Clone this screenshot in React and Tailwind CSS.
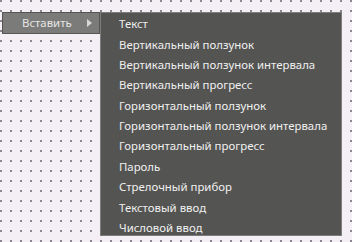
import React from "react";

const items = [
  "Текст",
  "Вертикальный ползунок",
  "Вертикальный ползунок интервала",
  "Вертикальный прогресс",
  "Горизонтальный ползунок",
  "Горизонтальный ползунок интервала",
  "Горизонтальный прогресс",
  "Пароль",
  "Стрелочный прибор",
  "Текстовый ввод",
  "Числовой ввод",
];

const App = () => {
  return (
    <div
      className="w-[352px] h-[242px] overflow-hidden bg-[#f3eff5] bg-[image:radial-gradient(circle,#8a8590_0.9px,transparent_1.1px)] bg-[size:10px_10px] bg-[position:-4px_-4px] flex items-start pt-[12px] pl-[2px]"
      style={{ fontFamily: '"Noto Sans", "Open Sans", sans-serif' }}
    >
      {/* Menu button */}
      <div className="w-[98px] h-[22px] bg-[#7b7b79] border border-[#555553] flex items-center pl-[19px] pr-[6px] text-[11.4px] text-[#e6e6e6]">
        <span className="flex-1">Вставить</span>
        <svg width="6" height="8" viewBox="0 0 6 8">
          <path d="M0 0 L5 4 L0 8 Z" fill="#d8d8d8" />
        </svg>
      </div>

      {/* Submenu */}
      <div className="w-[242px] h-[224px] bg-[#545452] border border-[#7d7d7b] pt-[0.5px]">
        {items.map((item) => (
          <div
            key={item}
            className="h-[20.4px] flex items-center pl-[18px] text-[11.4px] text-[#f0f0f0] whitespace-nowrap"
          >
            {item}
          </div>
        ))}
      </div>
    </div>
  );
};

export default App;
